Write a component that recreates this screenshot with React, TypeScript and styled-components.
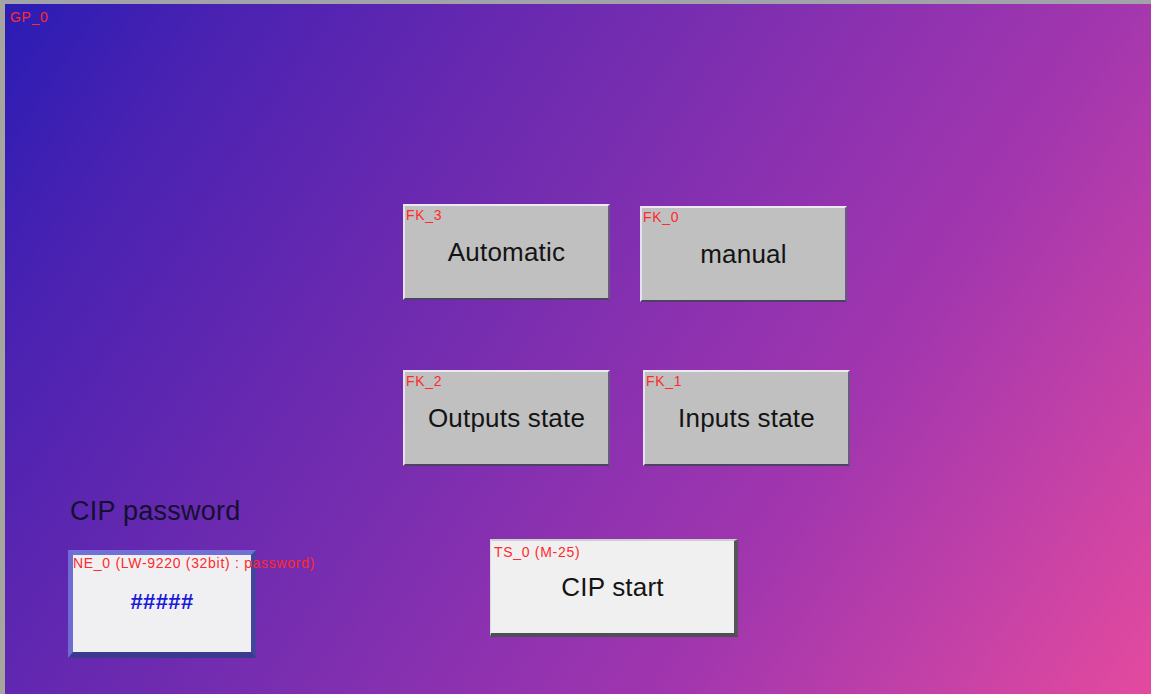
import React from "react";
import styled, { createGlobalStyle } from "styled-components";

const GlobalStyle = createGlobalStyle`
  html, body {
    margin: 0;
    padding: 0;
    width: 1151px;
    height: 694px;
    overflow: hidden;
    font-family: "Liberation Sans", Arial, sans-serif;
  }
`;

const Frame = styled.div`
  width: 1151px;
  height: 694px;
  box-sizing: border-box;
  border-top: 4px solid #a2a2aa;
  border-left: 5px solid #a6a69e;
  display: flex;
`;

const Canvas = styled.div`
  position: relative;
  flex: 1;
  display: flex;
  flex-direction: column;
  background: linear-gradient(
    123deg,
    #2a1cb4 0%,
    #4a22b2 14%,
    #6428b0 30%,
    #7a2eb0 45%,
    #9032b0 58%,
    #a236ae 70%,
    #c040a8 84%,
    #e44a9e 100%
  );
`;

const Tag = styled.span<{ $top: number; $left: number }>`
  position: absolute;
  top: ${(p) => p.$top}px;
  left: ${(p) => p.$left}px;
  font-size: 14px;
  line-height: 16px;
  letter-spacing: 0.7px;
  color: #ff2a2a;
  white-space: nowrap;
  pointer-events: none;
`;

const ButtonArea = styled.div`
  margin: 200px 0 0 398px;
  display: flex;
  flex-direction: column;
  gap: 68px;
`;

const ButtonRow = styled.div<{ $gap: number }>`
  display: flex;
  align-items: flex-start;
  gap: ${(p) => p.$gap}px;
`;

const FuncKey = styled.div<{ $dy?: number }>`
  position: relative;
  box-sizing: border-box;
  width: 207px;
  height: 96px;
  margin-top: ${(p) => p.$dy ?? 0}px;
  background: #c0c0c0;
  border-top: 2px solid #eee8f4;
  border-left: 2px solid #e8e0f0;
  border-right: 2px solid #6a5a82;
  border-bottom: 2px solid #4e4264;
  display: flex;
  align-items: center;
  justify-content: center;
  font-size: 26px;
  letter-spacing: 0.2px;
  color: #141414;
`;

const BottomRow = styled.div`
  margin: 30px 0 0 63px;
  display: flex;
  align-items: flex-start;
`;

const PasswordColumn = styled.div`
  width: 188px;
  display: flex;
  flex-direction: column;
`;

const PasswordTitle = styled.div`
  font-size: 27px;
  line-height: 30px;
  letter-spacing: 0.25px;
  color: #141030;
  margin-left: 2px;
  white-space: nowrap;
`;

const NumericEntry = styled.div`
  position: relative;
  box-sizing: border-box;
  width: 188px;
  height: 108px;
  margin-top: 24px;
  background: #f0f0f3;
  border-top: 5px solid #7070d6;
  border-left: 5px solid #6c6cd2;
  border-right: 5px solid #44449e;
  border-bottom: 6px solid #3a3a8e;
  display: flex;
  align-items: center;
  justify-content: center;
`;

const Hashes = styled.span`
  font-size: 22px;
  font-weight: bold;
  letter-spacing: 0.4px;
  color: #1a1ad8;
  margin-bottom: 4px;
`;

const ToggleSwitch = styled.div`
  position: relative;
  box-sizing: border-box;
  width: 248px;
  height: 98px;
  margin: 43px 0 0 234px;
  background: #f0f0f0;
  border-top: 2px solid #cfcfd2;
  border-left: 1px solid #dcdcdc;
  border-right: 4px solid #55555c;
  border-bottom: 4px solid #4e4e56;
  display: flex;
  align-items: center;
  justify-content: center;
  font-size: 26px;
  letter-spacing: 0.2px;
  color: #141414;
`;

export default function App() {
  return (
    <>
      <GlobalStyle />
      <Frame>
        <Canvas>
          <Tag $top={5} $left={5}>GP_0</Tag>
          <ButtonArea>
            <ButtonRow $gap={30}>
              <FuncKey>
                <Tag $top={1} $left={1}>FK_3</Tag>
                Automatic
              </FuncKey>
              <FuncKey $dy={2}>
                <Tag $top={1} $left={1}>FK_0</Tag>
                manual
              </FuncKey>
            </ButtonRow>
            <ButtonRow $gap={33}>
              <FuncKey>
                <Tag $top={1} $left={1}>FK_2</Tag>
                Outputs state
              </FuncKey>
              <FuncKey>
                <Tag $top={1} $left={1}>FK_1</Tag>
                Inputs state
              </FuncKey>
            </ButtonRow>
          </ButtonArea>
          <BottomRow>
            <PasswordColumn>
              <PasswordTitle>CIP password</PasswordTitle>
              <NumericEntry>
                <Tag $top={0} $left={0}>NE_0 (LW-9220 (32bit) : password)</Tag>
                <Hashes>#####</Hashes>
              </NumericEntry>
            </PasswordColumn>
            <ToggleSwitch>
              <Tag $top={3} $left={3}>TS_0 (M-25)</Tag>
              CIP start
            </ToggleSwitch>
          </BottomRow>
        </Canvas>
      </Frame>
    </>
  );
}
